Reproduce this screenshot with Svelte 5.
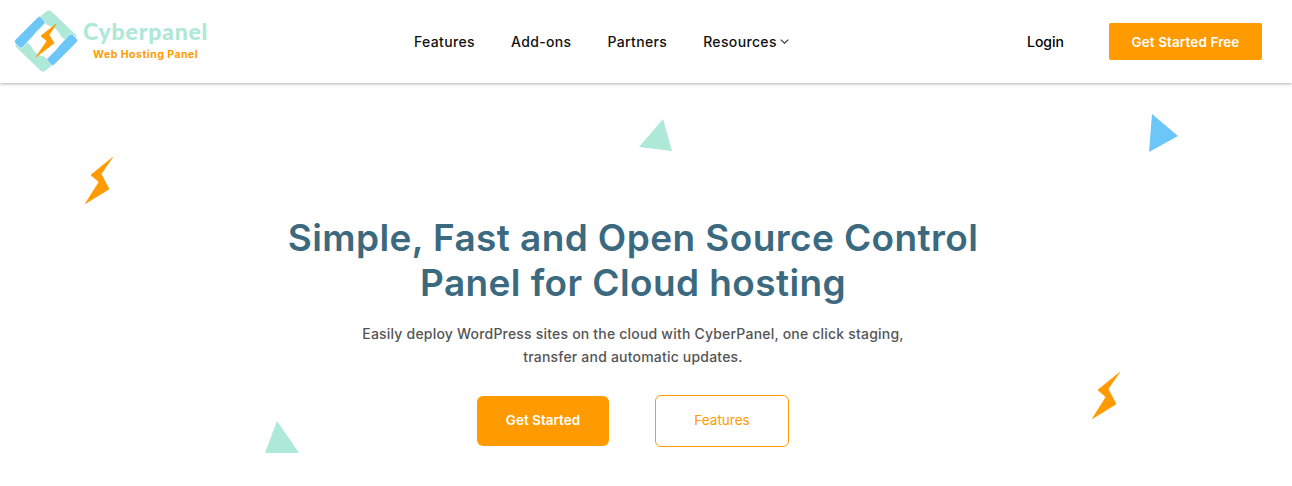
<script>
  const links = ["Features", "Add-ons", "Partners"];
</script>

<header class="header">
  <a class="brand" href="#top">
    <svg class="brand-mark" width="66" height="66" viewBox="12 9 66 66">
      <path d="M41 16 46 12q2-1 4 0L75 36q1 2 0 3l-6 6-31-26z" fill="#aee8d6" />
      <path d="M49 68 44 72q-2 1-4 0L15 48q-1-2 0-3l6-6 31 26z" fill="#aee8d6" />
      <circle cx="45" cy="42" r="15.500" fill="#fff" />
      <path d="M14 41 37 18q1.500-1 3 0l4.500 5.500-23 25q-1.500 1-3 0L14 44q-1-1.500 0-3z" fill="#6cc6f7" stroke="#fff" stroke-width="0.6" />
      <path d="M76 43 53 66q-1.500 1-3 0l-4.500-5.500 23-25q1.500-1 3 0L76 40q1 1.500 0 3z" fill="#6cc6f7" stroke="#fff" stroke-width="0.6" />
      <circle cx="45" cy="42" r="13.500" fill="#fff" />
      <path class="bolt" d="M55 25 40 37l6 5-11 16 18-14-5-8z" />
    </svg>
    <span class="brand-text">
      <span class="brand-name">Cyberpanel</span>
      <span class="brand-sub">Web Hosting Panel</span>
    </span>
  </a>
  <nav class="nav">
    {#each links as link}
      <a href="#top">{link}</a>
    {/each}
    <a class="drop" href="#top">
      Resources
      <svg width="9" height="5" viewBox="0 0 9 5"><path d="M.7.7l3.800 3.500L8.300.7" fill="none" stroke="#333" stroke-width="1.100" /></svg>
    </a>
  </nav>
  <div class="actions">
    <a class="login" href="#top">Login</a>
    <a class="btn-head" href="#top">Get Started Free</a>
  </div>
</header>

<main class="hero">
  <svg class="shape" style="left:85px;top:74px" width="29" height="48" viewBox="85 157 29 48">
    <path class="bolt" d="M112.500 157.500 91 175l8 7-13.500 21.500 23.500-14.500-8-15z" />
  </svg>
  <svg class="shape" style="left:1092px;top:289px" width="29" height="48" viewBox="85 157 29 48">
    <path class="bolt" d="M112.500 157.500 91 175l8 7-13.500 21.500 23.500-14.500-8-15z" />
  </svg>
  <svg class="shape" style="left:639px;top:36px" width="34" height="33" viewBox="639 119 34 33">
    <path d="M663 119 639 147l33 4z" fill="#aee8d6" />
  </svg>
  <svg class="shape" style="left:1149px;top:31px" width="30" height="39" viewBox="1149 114 30 39">
    <path d="M1152 114l26 22-29 16z" fill="#6cc6f7" />
  </svg>
  <svg class="shape" style="left:265px;top:338px" width="34" height="33" viewBox="265 421 34 33">
    <path d="M277 421 265 453h34z" fill="#aee8d6" />
  </svg>

  <h1>Simple, Fast and Open Source Control<br />Panel for Cloud hosting</h1>
  <p>Easily deploy WordPress sites on the cloud with CyberPanel, one click staging,<br />transfer and automatic updates.</p>
  <div class="cta">
    <a class="btn-solid" href="#top">Get Started</a>
    <a class="btn-line" href="#top">Features</a>
  </div>
</main>

<style>
  :global(body) {
    background: #fff;
    font-family: "Inter", "Liberation Sans", sans-serif;
  }
  a {
    text-decoration: none;
    color: inherit;
  }
  .header {
    display: flex;
    align-items: center;
    height: 83px;
    padding: 0 30px 0 13px;
    box-shadow: 0 1px 3px rgba(0, 0, 0, 0.3);
    position: relative;
  }
  .brand {
    display: flex;
    align-items: center;
    width: 401px;
    flex: none;
    margin-top: -1px;
  }
  .brand-mark {
    flex: none;
    margin-right: 4px;
  }
  .bolt {
    fill: #ff9b00;
    stroke: #ff9b00;
    stroke-width: 0.8;
    stroke-linejoin: round;
  }
  .brand-text {
    display: flex;
    flex-direction: column;
    align-items: center;
    font-family: "Lato", sans-serif;
    font-weight: 900;
  }
  .brand-name {
    color: #aee8d6;
    font-size: 23px;
    line-height: 24px;
    letter-spacing: 0.8px;
    margin-top: -2px;
  }
  .brand-sub {
    color: #ff9b00;
    font-family: "Inter", sans-serif;
    font-weight: 700;
    font-size: 10.5px;
    line-height: 15px;
    letter-spacing: 0.5px;
    margin-top: 4px;
  }
  .nav {
    display: flex;
    align-items: center;
    gap: 36px;
    font-size: 14px;
    letter-spacing: 0.35px;
    font-weight: 500;
    color: #111;
  }
  .drop {
    display: flex;
    align-items: center;
    gap: 3px;
  }
  .actions {
    margin-left: auto;
    display: flex;
    align-items: center;
    gap: 45px;
  }
  .login {
    font-size: 14px;
    font-weight: 500;
    color: #000;
  }
  .btn-head {
    width: 153px;
    height: 37px;
    display: flex;
    align-items: center;
    justify-content: center;
    background: #ff9b00;
    color: #fff;
    border-radius: 2px;
    font-size: 13.5px;
    letter-spacing: 0.1px;
    font-weight: 600;
  }
  .hero {
    position: relative;
    min-height: 403px;
    text-align: center;
    padding-top: 132px;
    padding-right: 26px;
    box-sizing: border-box;
  }
  .shape {
    position: absolute;
  }
  h1 {
    margin: 0;
    font-size: 37px;
    line-height: 45px;
    letter-spacing: 0.4px;
    font-weight: 600;
    color: #3b6a80;
  }
  p {
    margin: 17px 0 0;
    font-size: 14px;
    line-height: 23px;
    letter-spacing: 0.2px;
    font-weight: 500;
    color: #555;
  }
  .cta {
    display: flex;
    justify-content: center;
    align-items: center;
    gap: 46px;
    margin-top: 27px;
  }
  .btn-solid,
  .btn-line {
    display: flex;
    align-items: center;
    justify-content: center;
    box-sizing: border-box;
    padding-bottom: 2px;
    border-radius: 6px;
    font-size: 13.5px;
  }
  .btn-solid {
    width: 132px;
    height: 50px;
    background: #ff9b00;
    color: #fff;
    font-weight: 600;
  }
  .btn-line {
    width: 134px;
    height: 52px;
    border: 1px solid #ff9b00;
    color: #ff9b00;
    font-weight: 400;
  }
</style>
